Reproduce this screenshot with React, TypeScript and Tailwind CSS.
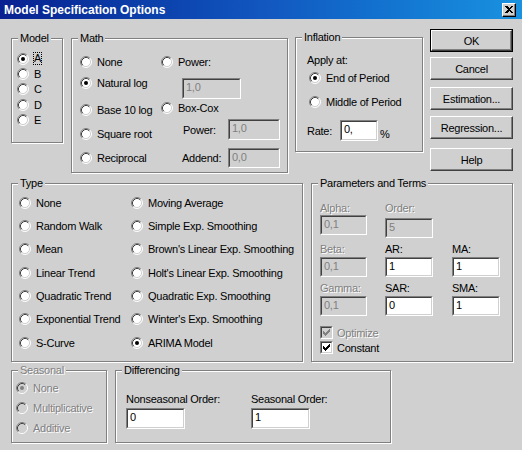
import React from 'react';

type RadioProps = { checked?: boolean; disabled?: boolean };

function Radio({ checked = false, disabled = false }: RadioProps) {
  return (
    <svg width="12" height="12" viewBox="0 0 12 12" className="shrink-0">
      <circle cx="6" cy="6" r="5" fill={disabled ? '#d0d0d0' : '#fff'} />
      <path d="M2.11 9.89 A5.5 5.5 0 0 1 9.89 2.11" fill="none" stroke="#808080" />
      <path d="M9.89 2.11 A5.5 5.5 0 0 1 2.11 9.89" fill="none" stroke="#fff" />
      <path d="M2.82 9.18 A4.5 4.5 0 0 1 9.18 2.82" fill="none" stroke="#404040" />
      <path d="M9.18 2.82 A4.5 4.5 0 0 1 2.82 9.18" fill="none" stroke="#d0d0d0" />
      {checked && <circle cx="6" cy="6" r="2" fill={disabled ? '#808080' : '#000'} />}
    </svg>
  );
}

function RadioItem({ label, checked, disabled, className = '' }: RadioProps & { label: string; className?: string }) {
  return (
    <div className={`flex items-center h-[12px] ${className}`}>
      <Radio checked={checked} disabled={disabled} />
      <span className={`ml-[5px] whitespace-nowrap ${disabled ? 'text-[#808080] [text-shadow:1px_1px_0_#fff]' : ''}`}>
        {label}
      </span>
    </div>
  );
}

function Field({ value, disabled = false, className = '' }: { value: string; disabled?: boolean; className?: string }) {
  return (
    <div className={`shrink-0 border border-t-[#808080] border-l-[#808080] border-r-white border-b-white ${className}`}>
      <div
        className={`h-full border border-t-[#404040] border-l-[#404040] border-r-[#d0d0d0] border-b-[#d0d0d0] pl-[2px] pt-[1px] leading-[13px] ${
          disabled ? 'bg-[#d0d0d0] text-[#808080]' : 'bg-white text-black'
        }`}
      >
        {value}
      </div>
    </div>
  );
}

function Check({ checked = false, disabled = false }: RadioProps) {
  return (
    <div className="shrink-0 w-[13px] h-[13px] border border-t-[#808080] border-l-[#808080] border-r-white border-b-white">
      <div
        className={`h-full border border-t-[#404040] border-l-[#404040] border-r-[#d0d0d0] border-b-[#d0d0d0] flex items-center justify-center ${
          disabled ? 'bg-[#d0d0d0]' : 'bg-white'
        }`}
      >
        {checked && (
          <svg width="7" height="7" viewBox="0 0 7 7" shapeRendering="crispEdges">
            <path d="M0 2 L2 4 L6 0 L7 0 L7 2 L2 7 L0 5 Z" fill={disabled ? '#808080' : '#000'} />
          </svg>
        )}
      </div>
    </div>
  );
}

function Group({
  title,
  disabled = false,
  className = '',
  children,
}: {
  title: string;
  disabled?: boolean;
  className?: string;
  children?: React.ReactNode;
}) {
  return (
    <div className={`relative shrink-0 border border-[#808080] shadow-[inset_1px_1px_0_#fff,1px_1px_0_#fff] ${className}`}>
      <span
        className={`absolute left-[6px] top-[-7px] px-[2px] bg-[#d0d0d0] leading-[13px] whitespace-nowrap ${
          disabled ? 'text-[#808080] [text-shadow:1px_1px_0_#fff]' : ''
        }`}
      >
        {title}
      </span>
      {children}
    </div>
  );
}

function Btn({ label, def = false, className = '' }: { label: string; def?: boolean; className?: string }) {
  const face = (
    <div className="h-full w-full flex items-center justify-center bg-[#d0d0d0] border border-t-white border-l-white border-b-[#404040] border-r-[#404040] shadow-[inset_-1px_-1px_0_#808080]">
      {label}
    </div>
  );
  return def ? (
    <div className={`h-[23px] border border-black ${className}`}>{face}</div>
  ) : (
    <div className={`h-[23px] ${className}`}>{face}</div>
  );
}

const dim = 'text-[#808080] [text-shadow:1px_1px_0_#fff]';

export default function App() {
  return (
    <div className="w-[522px] h-[450px] overflow-hidden bg-[#d0d0d0] font-['Liberation_Sans',Arial,sans-serif] text-[11px] tracking-[-0.25px] leading-[12px] text-black select-none">
      {/* title bar */}
      <div className="h-[19px] flex items-center pl-[4px] pr-[6px] bg-linear-to-r from-[#0a2090] via-[#1256bf] to-[#1a92e0]">
        <span className="text-white font-bold text-[12px] tracking-normal">Model Specification Options</span>
        <div className="ml-auto w-[14px] h-[14px] bg-[#d0d0d0] border border-t-white border-l-white border-b-black border-r-black shadow-[inset_-1px_-1px_0_#808080] flex items-center justify-center">
          <svg width="8" height="7" viewBox="0 0 8 7" shapeRendering="crispEdges">
            <path d="M0 0 H2 L4 2 L6 0 H8 L5 3.5 L8 7 H6 L4 5 L2 7 H0 L3 3.5 Z" fill="#000" />
          </svg>
        </div>
      </div>

      <div className="flex flex-col pl-[11px]">
        {/* row 1 */}
        <div className="flex items-start h-[164px]">
          <Group title="Model" className="mt-[19px] w-[52px] h-[105px] pt-[12px] pl-[5px]">
            <div className="flex items-center h-[15.3px]">
              <Radio checked />
              <span className="ml-[4px] border border-dotted border-black leading-[11px]">A</span>
            </div>
            {['B', 'C', 'D', 'E'].map((l) => (
              <div key={l} className="flex items-center h-[15.3px]">
                <Radio />
                <span className="ml-[5px]">{l}</span>
              </div>
            ))}
          </Group>

          <Group title="Math" className="ml-[8px] mt-[19px] w-[217px] h-[135px] pt-[17px] pl-[8px] flex">
            <div className="w-[81px] flex flex-col">
              <RadioItem label="None" />
              <RadioItem label="Natural log" checked className="mt-[9px]" />
              <RadioItem label="Base 10 log" className="mt-[15px]" />
              <RadioItem label="Square root" className="mt-[12px]" />
              <RadioItem label="Reciprocal" className="mt-[12px]" />
            </div>
            <div className="flex flex-col">
              <RadioItem label="Power:" />
              <Field value="1,0" disabled className="ml-[21px] mt-[10px] w-[59px] h-[21px]" />
              <RadioItem label="Box-Cox" className="mt-[3px]" />
              <div className="flex items-center mt-[5px] h-[21px]">
                <span className="w-[67px] pl-[22px]">Power:</span>
                <Field value="1,0" disabled className="w-[52px] h-[21px]" />
              </div>
              <div className="flex items-center mt-[8px] h-[20px]">
                <span className="w-[67px] pl-[21px]">Addend:</span>
                <Field value="0,0" disabled className="w-[52px] h-[20px]" />
              </div>
            </div>
          </Group>

          <Group title="Inflation" className="ml-[7px] mt-[18px] w-[128px] h-[115px] pt-[16px] pl-[11px]">
            <div className="h-[12px]">Apply at:</div>
            <RadioItem label="End of Period" checked className="mt-[6px] ml-[2px]" />
            <RadioItem label="Middle of Period" className="mt-[12px] ml-[2px]" />
            <div className="flex items-start mt-[12px] h-[21px]">
              <span className="w-[33px] mt-[5px]">Rate:</span>
              <Field value="0," className="w-[38px] h-[21px]" />
              <span className="ml-[2px] mt-[8px]">%</span>
            </div>
          </Group>

          <div className="ml-[7px] mt-[10px] w-[83px] flex flex-col">
            <Btn label="OK" def />
            <Btn label="Cancel" className="mt-[5px]" />
            <Btn label="Estimation..." className="mt-[7px]" />
            <Btn label="Regression..." className="mt-[6px]" />
            <Btn label="Help" className="mt-[9px]" />
          </div>
        </div>

        {/* row 2 */}
        <div className="flex items-start h-[187px]">
          <Group title="Type" className="w-[292px] h-[179px] pt-[7px] pl-[7px]">
            <div className="grid grid-cols-[112px_1fr] auto-rows-[23.33px] items-center">
              <RadioItem label="None" />
              <RadioItem label="Moving Average" />
              <RadioItem label="Random Walk" />
              <RadioItem label="Simple Exp. Smoothing" />
              <RadioItem label="Mean" />
              <RadioItem label="Brown's Linear Exp. Smoothing" />
              <RadioItem label="Linear Trend" />
              <RadioItem label="Holt's Linear Exp. Smoothing" />
              <RadioItem label="Quadratic Trend" />
              <RadioItem label="Quadratic Exp. Smoothing" />
              <RadioItem label="Exponential Trend" />
              <RadioItem label="Winter's Exp. Smoothing" />
              <RadioItem label="S-Curve" />
              <RadioItem label="ARIMA Model" checked />
            </div>
          </Group>

          <Group title="Parameters and Terms" className="ml-[8px] w-[202px] h-[179px] pt-[18px] pl-[8px]">
            <div className="grid grid-cols-[65px_67px_48px] h-[41px] items-start">
              <div className="flex flex-col">
                <span className={`h-[12px] ${dim}`}>Alpha:</span>
                <Field value="0,1" disabled className="mt-[1px] w-[47px] h-[20px]" />
              </div>
              <div className="flex flex-col">
                <span className={`h-[12px] ${dim}`}>Order:</span>
                <Field value="5" disabled className="mt-[4px] w-[48px] h-[20px]" />
              </div>
              <div />
            </div>
            <div className="grid grid-cols-[65px_67px_48px] h-[39px] items-start">
              <div className="flex flex-col">
                <span className={`h-[12px] ${dim}`}>Beta:</span>
                <Field value="0,1" disabled className="mt-[2px] w-[47px] h-[20px]" />
              </div>
              <div className="flex flex-col">
                <span className="h-[12px]">AR:</span>
                <Field value="1" className="mt-[2px] w-[48px] h-[20px]" />
              </div>
              <div className="flex flex-col">
                <span className="h-[12px]">MA:</span>
                <Field value="1" className="mt-[2px] w-[48px] h-[20px]" />
              </div>
            </div>
            <div className="grid grid-cols-[65px_67px_48px] h-[43px] items-start">
              <div className="flex flex-col">
                <span className={`h-[12px] ${dim}`}>Gamma:</span>
                <Field value="0,1" disabled className="mt-[2px] w-[47px] h-[20px]" />
              </div>
              <div className="flex flex-col">
                <span className="h-[12px]">SAR:</span>
                <Field value="0" className="mt-[2px] w-[48px] h-[20px]" />
              </div>
              <div className="flex flex-col">
                <span className="h-[12px]">SMA:</span>
                <Field value="1" className="mt-[2px] w-[48px] h-[20px]" />
              </div>
            </div>
            <div className="flex items-center h-[15px]">
              <Check checked disabled />
              <span className={`ml-[4px] ${dim}`}>Optimize</span>
            </div>
            <div className="flex items-center h-[15px]">
              <Check checked />
              <span className="ml-[4px]">Constant</span>
            </div>
          </Group>
        </div>

        {/* row 3 */}
        <div className="flex items-start">
          <Group title="Seasonal" disabled className="w-[96px] h-[73px] pt-[11px] pl-[4px] flex flex-col gap-[8px]">
            <RadioItem label="None" checked disabled />
            <RadioItem label="Multiplicative" disabled />
            <RadioItem label="Additive" disabled />
          </Group>

          <Group title="Differencing" className="ml-[8px] w-[276px] h-[73px] pt-[22px] pl-[10px] flex">
            <div className="w-[125px] flex flex-col">
              <span className="h-[12px]">Nonseasonal Order:</span>
              <Field value="0" className="mt-[3px] w-[59px] h-[21px]" />
            </div>
            <div className="flex flex-col">
              <span className="h-[12px]">Seasonal Order:</span>
              <Field value="1" className="mt-[3px] w-[59px] h-[21px]" />
            </div>
          </Group>
        </div>
      </div>
    </div>
  );
}
